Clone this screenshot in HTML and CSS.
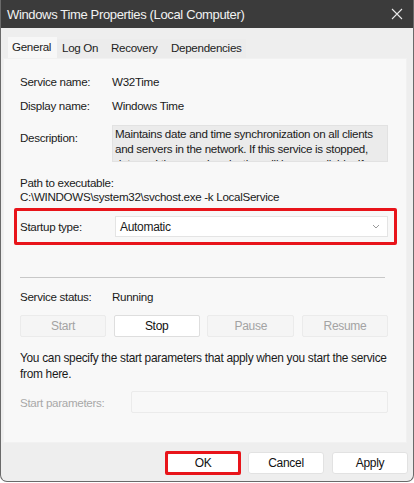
FILE: index.html
```html
<!DOCTYPE html>
<html>
<head>
<meta charset="utf-8">
<link rel="stylesheet" href="styles.css">
</head>
<body>
<div class="window">
  <div class="titlebar">
    <span class="title">Windows Time Properties (Local Computer)</span>
    <svg class="close" width="12" height="12" viewBox="0 0 12 12"><path d="M1 1L11 11M11 1L1 11" stroke="#e8e8e8" stroke-width="1.1" fill="none"/></svg>
  </div>
  <div class="tabs">
    <div class="tab active">General</div>
    <div class="tab">Log On</div>
    <div class="tab">Recovery</div>
    <div class="tab">Dependencies</div>
  </div>
  <div class="panel">
    <div class="row r1"><span class="label">Service name:</span><span>W32Time</span></div>
    <div class="row r2"><span class="label">Display name:</span><span>Windows Time</span></div>
    <div class="row desc-row"><span class="label desc-label">Description:</span>
      <div class="desc">Maintains date and time synchronization on all clients and servers in the network. If this service is stopped, date and time synchronization will be unavailable. If</div>
    </div>
    <div class="path-label">Path to executable:</div>
    <div class="path">C:\WINDOWS\system32\svchost.exe -k LocalService</div>
    <div class="highlight startup">
      <span class="label">Startup type:</span>
      <div class="select"><span>Automatic</span>
        <svg width="8" height="5" viewBox="0 0 8 5"><path d="M1 1L4 4L7 1" stroke="#9a9a9a" stroke-width="1" fill="none"/></svg>
      </div>
    </div>
    <div class="sep"></div>
    <div class="row status"><span class="label">Service status:</span><span>Running</span></div>
    <div class="btnrow">
      <div class="btn disabled">Start</div>
      <div class="btn">Stop</div>
      <div class="btn disabled">Pause</div>
      <div class="btn disabled">Resume</div>
    </div>
    <p class="info">You can specify the start parameters that apply when you start the service from here.</p>
    <div class="params"><span class="label plabel">Start parameters:</span><div class="input"></div></div>
  </div>
  <div class="footer">
    <div class="okwrap"><div class="fbtn ok">OK</div></div>
    <div class="fbtn">Cancel</div>
    <div class="fbtn">Apply</div>
  </div>
</div>
</body>
</html>
```

FILE: styles.css
```css
* { box-sizing: border-box; }
html, body { margin: 0; padding: 0; background: #ffffff; }
body {
  font-family: "Liberation Sans", Arial, sans-serif;
  font-size: 11.6px;
  letter-spacing: -0.3px;
  color: #1a1a1a;
}
.window {
  width: 414px;
  height: 482px;
  background: #eeeeee;
  border: 1px solid #6a6a6a;
  border-top: none;
  border-radius: 0 0 7px 7px;
  overflow: hidden;
  display: flex;
  flex-direction: column;
}
.titlebar {
  height: 28px;
  background: #3b3b3b;
  display: flex;
  align-items: center;
  justify-content: space-between;
  padding: 0 10px 0 6px;
  color: #f2f2f2;
  font-size: 13px;
  letter-spacing: -0.35px;
}
.close { display: block; }
.tabs {
  display: flex;
  align-items: flex-end;
  height: 30px;
  padding-left: 7px;
}
.tab {
  height: 19px;
  line-height: 18px;
  background: #ececec;
  color: #222;
}
.tab.active {
  width: 49px;
  height: 21px;
  background: #f7f7f7;
  line-height: 19px;
  padding-left: 4px;
}
.tabs .tab:nth-child(2) { width: 47px; padding-left: 5px; }
.tabs .tab:nth-child(3) { width: 61px; padding-left: 7px; }
.tabs .tab:nth-child(4) { width: 81px; padding-left: 6px; }
.panel {
  margin: 0 6px 0 2px;
  height: 385px;
  background: #f8f8f8;
  border: 1px solid #f1f1f1;
  padding: 15px 18px 0 16px;
}
.row {
  display: grid;
  grid-template-columns: 92px 1fr;
  line-height: 16px;
}
.r2 { margin-top: 8px; }
.desc-row { margin-top: 11px; align-items: start; }
.desc-label { padding-top: 5px; }
.desc {
  height: 37px;
  overflow: hidden;
  background: #ebebeb;
  border: 1px solid #e2e2e2;
  padding: 0 4px 0 2px;
  line-height: 15px;
}
.path-label { margin-top: 13px; line-height: 16px; }
.path { margin-top: -2px; line-height: 16px; }
.highlight {
  border: 3px solid #e8141a;
  border-radius: 2px;
}
.startup {
  margin: 3px -9px 0 -6px;
  height: 37px;
  display: grid;
  grid-template-columns: 95px 1fr;
  align-items: center;
  padding: 0 6px 0 3px;
}
.select {
  height: 21px;
  background: #ffffff;
  border: 1px solid #e4e4e4;
  display: flex;
  align-items: center;
  justify-content: space-between;
  padding: 0 7px 0 4px;
  font-size: 12px;
}
.select svg { display: block; }
.sep {
  margin-top: 32px;
  height: 1px;
  background: #c8c8c8;
  margin-right: 3px;
}
.status { margin-top: 11px; }
.btnrow {
  margin-top: 10px;
  display: grid;
  grid-template-columns: 86px 86px 87px 86px;
  justify-content: space-between;
  height: 22px;
}
.btn {
  background: #ffffff;
  border: 1px solid #dedede;
  border-radius: 2px;
  text-align: center;
  line-height: 20px;
  color: #111;
  font-size: 12px;
}
.btn.disabled {
  background: #f5f5f5;
  border-color: #ebebeb;
  color: #a3a3a3;
}
.info {
  margin: 14px 0 0 0;
  line-height: 15.5px;
  font-size: 11.9px;
}
.params {
  margin-top: 9px;
  display: grid;
  grid-template-columns: 111px 1fr;
  align-items: center;
  height: 22px;
}
.plabel { color: #a8a8a8; }
.input {
  height: 22px;
  background: #f8f8f8;
  border: 1px solid #ebebeb;
  border-radius: 2px;
}
.footer {
  display: flex;
  justify-content: flex-end;
  align-items: center;
  gap: 8px;
  padding: 8px 5px 0 0;
}
.okwrap {
  border: 3px solid #e8141a;
  border-radius: 2px;
  margin-right: -1px;
}
.fbtn {
  width: 76px;
  height: 22px;
  background: #ffffff;
  border: 1px solid #e2e2e2;
  border-radius: 3px;
  text-align: center;
  line-height: 20px;
  font-size: 12px;
  color: #111;
}
.ok { width: 70px; height: 18px; border: none; line-height: 18px; }
```
